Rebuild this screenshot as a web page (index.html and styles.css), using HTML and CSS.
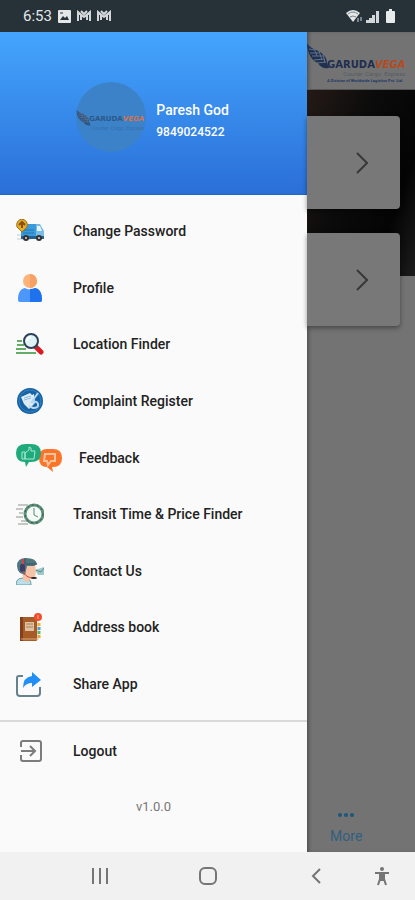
FILE: index.html
```html
<!DOCTYPE html>
<html lang="en">
<head>
    <meta charset="utf-8">
    <meta name="viewport" content="width=device-width, initial-scale=1">
    <title>Garudavega</title>
    <link rel="stylesheet" href="styles.css">
</head>
<body>
    <!-- Wing shape shared by both logos -->
    <svg class="defs" width="0" height="0" aria-hidden="true">
        <symbol id="wing" viewBox="0 0 24 26">
            <path fill="currentColor" d="M0 0C2 5 8 6 13 9c5 3 7 7 7 11l2 5c-5 1-9-1-11-5C5 18 0 10 0 0z"/>
            <path class="feather" d="M2 6l6 1M3 10l9 0M5 13l11 0M7 17l11-1M10 20l9-1M7 5l3 8M12 8l3 9M16 11l2 9"/>
        </symbol>
    </svg>

    <header class="status-bar">
        <span class="time">6:53</span>
        <svg width="13" height="13" viewBox="0 0 13 13"><rect width="13" height="13" rx="1" fill="#e4e7e8"/><path d="M2 10l3-4 2 2 2-2 2 4z" fill="#263238"/><path d="M2 3h3" stroke="#263238"/></svg>
        <svg width="14" height="12" viewBox="0 0 14 12" fill="none" stroke="#d3d7d9" stroke-width="2"><path d="M1 11V2l6 5 6-5v9M4 10V5M10 10V5M4 1l3 3 3-3"/></svg>
        <svg width="14" height="12" viewBox="0 0 14 12" fill="none" stroke="#d3d7d9" stroke-width="2"><path d="M1 11V2l6 5 6-5v9M4 10V5M10 10V5M4 1l3 3 3-3"/></svg>
        <div class="status-right">
            <svg width="17" height="14" viewBox="0 0 17 14"><path d="M0 4q7-6 14 0l-7 9z" fill="#e4e7e8"/><path d="M2 5q5-4 10 0M4 8q3-2 6 0" fill="none" stroke="#7c868a"/><path d="M12 9v4M15 8v4" stroke="#7c868a" stroke-width="2"/></svg>
            <svg width="13" height="13" viewBox="0 0 13 13" fill="#d3d7d9"><path d="M0 10h3v3H0zM3 8h3v5H3zM6 5h3v8H6zM10 1h3v12h-3z"/></svg>
            <svg class="battery" width="9" height="14" viewBox="0 0 9 14" fill="#e8ebec"><path d="M3 0h3v2h2q1 0 1 1v10q0 1-1 1H1q-1 0-1-1V3q0-1 1-1h2z"/></svg>
        </div>
    </header>

    <div class="screen">
        <aside class="drawer">
            <div class="profile">
                <div class="avatar">
                    <svg class="wing" width="16" height="17"><use href="#wing"/></svg>
                    <div class="brand">
                        <div class="brand-name">GARUDA<span>VEGA</span></div>
                        <div class="brand-line">Courier. Cargo. Express</div>
                    </div>
                </div>
                <div class="user">
                    <div class="user-name">Paresh God</div>
                    <div class="user-phone">9849024522</div>
                </div>
            </div>

            <nav class="menu">
                <a href="#password">
                    <svg width="28" height="24" viewBox="0 0 28 24">
                        <path d="M1 16h8M1 20h14" stroke="#c6c9cc"/>
                        <path d="M5 7q0-2 2-2h13v14H5z" fill="#3b9ada"/><path d="M20 5h4l4 7v7h-8z" fill="#79bce8"/>
                        <path d="M21 7h3l2 5h-5z" fill="#e7f4fb"/><path d="M7 11h11M7 14h11" stroke="#2379b8"/><path d="M5 17h23v3H5z" fill="#26618f"/>
                        <circle cx="10" cy="19" r="3" fill="#333"/><circle cx="10" cy="19" r="1" fill="#ddd"/><circle cx="23" cy="19" r="3" fill="#333"/><circle cx="23" cy="19" r="1" fill="#ddd"/>
                        <path d="M6 0a6 6 0 0 1 5 8l-5 5-5-5a6 6 0 0 1 5-8z" fill="#e6ad22" stroke="#96721c"/><path d="M6 9V4M3 6l3-3 3 3" fill="none" stroke="#8d4c1c" stroke-width="2"/>
                    </svg>
                    <span>Change Password</span>
                </a>
                <a href="#profile">
                    <svg width="28" height="28" viewBox="0 0 28 28">
                        <circle cx="14" cy="7" r="7" fill="#fdb379"/><path d="M14 0a7 7 0 0 1 0 14z" fill="#f7a264"/>
                        <path d="M2 26c0-7 2-11 7-12q5 3 10 0c5 1 7 5 7 12q0 2-2 2H4q-2 0-2-2z" fill="#4d96fb"/><path d="M14 15q3 0 5-1c5 1 7 5 7 12q0 2-2 2H14z" fill="#1f72ee"/>
                    </svg>
                    <span>Profile</span>
                </a>
                <a href="#location">
                    <svg width="28" height="22" viewBox="0 0 28 22">
                        <path d="M1 8h5M1 12h7M0 16h10M0 20h20" stroke="#63ad68" stroke-width="2"/>
                        <path d="M19 13l6 6" stroke="#d71920" stroke-width="5" stroke-linecap="round"/><path d="M18 11l3 3" stroke="#455" stroke-width="3"/>
                        <circle cx="15" cy="8" r="7" fill="#dff3f7" stroke="#2f4055" stroke-width="2"/><path d="M11 8a4 4 0 0 1 4-4" fill="none" stroke="#fff" stroke-width="2"/>
                    </svg>
                    <span>Location Finder</span>
                </a>
                <a href="#complaint">
                    <svg width="28" height="28" viewBox="0 0 28 28">
                        <circle cx="14" cy="14" r="13" fill="#1763a6"/><circle cx="14" cy="14" r="11" fill="none" stroke="#3582c0"/>
                        <path d="M5 10l9-4 2 2 2-1 1 9-6 6-5-5z" fill="#dcecf6"/><path d="M8 11l7-2M8 13l7-2" stroke="#8db9dc"/>
                        <path d="M22 6l-7 10M16 16q5-3 6 1t-5 4l-4-2" fill="none" stroke="#b7d7ee" stroke-width="2"/>
                    </svg>
                    <span>Complaint Register</span>
                </a>
                <a href="#feedback" class="wide">
                    <svg width="46" height="28" viewBox="0 0 46 28">
                        <path d="M31 5h6q9 0 9 9t-9 9h-1l1 5-6-5q-8 0-8-9t8-9z" fill="#fb742a"/>
                        <path d="M29 10h10v7h-4l-3 4-1-4h-3z" fill="none" stroke="#ffc39b" stroke-width="2"/>
                        <path d="M10 0h5q10 0 10 9t-10 9h-2l-3 5-1-5Q0 18 0 9t10-9z" fill="#20aa7c"/>
                        <path d="M6 8h3v7H6zM9 9l4-3V3q3 0 2 4h4l-1 8H9z" fill="none" stroke="#a5eacf" stroke-width="1"/>
                    </svg>
                    <span>Feedback</span>
                </a>
                <a href="#transit">
                    <svg width="28" height="22" viewBox="0 0 28 22">
                        <path d="M2 2h10M0 6h7M3 10h4M0 14h7M5 18h6M2 21h10" stroke="#8d9590"/>
                        <circle cx="18" cy="11" r="9" fill="#f4faf7" stroke="#5f8f7b" stroke-width="3"/><circle cx="18" cy="11" r="9" fill="none" stroke="#2f5a49" stroke-dasharray="2 3"/>
                        <path d="M18 5v7l4 2" fill="none" stroke="#638578"/>
                    </svg>
                    <span>Transit Time &amp; Price Finder</span>
                </a>
                <a href="#contact">
                    <svg width="28" height="28" viewBox="0 0 28 28">
                        <path d="M0 28q0-7 7-7h4q4 1 4 7z" fill="#b9dfe9" stroke="#6c9aa8"/>
                        <path d="M6 7h13l1 7-1 7-5 1-2 3q-4 0-5-3z" fill="#f5c3a6"/>
                        <path d="M1 9Q1 1 10 1q10 0 11 6l-3 2h-7l-2 9-5-2q-3-3-3-7z" fill="#4f7780"/><path d="M9 1v6h12" fill="none" stroke="#36565e"/>
                        <path d="M7 2v6" stroke="#d4424e" stroke-width="2"/><rect x="4" y="7" width="5" height="8" rx="2" fill="#3d3d67"/><path d="M7 14q3 7 10 7" fill="none" stroke="#d4424e"/><ellipse cx="18" cy="21" rx="3" ry="1" fill="#222"/>
                        <path d="M19 13l9-3v8h-6z" fill="#9cc9ca"/><path d="M20 13l5 2 3-4" fill="none" stroke="#588d91"/>
                    </svg>
                    <span>Contact Us</span>
                </a>
                <a href="#address">
                    <svg width="28" height="28" viewBox="0 0 28 28">
                        <path d="M19 4h4v23h-4z" fill="#e9e4dc"/><path d="M23 10v3" stroke="#e9b72f" stroke-width="3"/><path d="M23 14v3" stroke="#4b9bd4" stroke-width="3"/><path d="M23 18v3" stroke="#62b661" stroke-width="3"/><path d="M23 22v3" stroke="#dfa93b" stroke-width="3"/>
                        <rect x="4" y="4" width="17" height="24" rx="1" fill="#a75c27"/><path d="M4 4h3v24H4z" fill="#83401b"/><path d="M5 26h17" stroke="#d9a77d" stroke-width="1"/>
                        <rect x="9" y="9" width="9" height="9" fill="#ddc3a4"/><path d="M10 11h7M10 14h7" stroke="#ad7f57"/>
                        <circle cx="22" cy="4" r="4" fill="#ee4d2e"/><path d="M22 2v4" stroke="#ffad84" stroke-width="1"/>
                    </svg>
                    <span>Address book</span>
                </a>
                <a href="#share">
                    <svg width="28" height="26" viewBox="0 0 28 26">
                        <path d="M7 5H3Q1 5 1 7v15q0 3 3 3h17q3 0 3-3v-6" fill="none" stroke="#66808c" stroke-width="2"/>
                        <path d="M16 1l9 8-9 7v-4q-6 0-9 5Q7 6 16 5z" fill="#218ff3"/>
                    </svg>
                    <span>Share App</span>
                </a>
            </nav>

            <div class="drawer-foot">
                <a href="#logout">
                    <svg width="28" height="22" viewBox="0 0 28 22" fill="none" stroke="#7c7c7c" stroke-width="2">
                        <path d="M5 7V3q0-2 2-2h16q2 0 2 2v16q0 2-2 2H7q-2 0-2-2v-4M5 11h13M14 6l5 5-5 5"/>
                    </svg>
                    <span>Logout</span>
                </a>
                <p class="version">v1.0.0</p>
            </div>
        </aside>

        <!-- Home page dimmed behind the drawer -->
        <main class="page">
            <div class="page-head">
                <svg class="wing" width="24" height="26"><use href="#wing"/></svg>
                <div class="brand">
                    <div class="brand-name">GARUDA<span>VEGA</span></div>
                    <div class="brand-line">Courier. Cargo. Express</div>
                    <div class="brand-sub">A Division of Worldwide Logistics Pvt. Ltd.</div>
                </div>
            </div>
            <div class="cards">
                <a class="card" href="#first" aria-label="Open"><svg width="12" height="22" viewBox="0 0 12 22"><path d="M1 1l10 10L1 21"/></svg></a>
                <a class="card" href="#second" aria-label="Open"><svg width="12" height="22" viewBox="0 0 12 22"><path d="M1 1l10 10L1 21"/></svg></a>
            </div>
            <a class="more" href="#more">
                <svg width="18" height="6" viewBox="0 0 18 6" fill="#1d5878"><circle cx="3" cy="3" r="2"/><circle cx="9" cy="3" r="2"/><circle cx="15" cy="3" r="2"/></svg>
                <span>More</span>
            </a>
        </main>
    </div>

    <footer class="nav-bar">
        <button type="button" aria-label="Recents"><svg width="16" height="16" viewBox="0 0 16 16"><path d="M1 0v16M8 0v16M15 0v16"/></svg></button>
        <button type="button" aria-label="Home"><svg width="18" height="18" viewBox="0 0 18 18"><rect x="1" y="1" width="16" height="16" rx="5"/></svg></button>
        <button type="button" aria-label="Back"><svg width="10" height="16" viewBox="0 0 10 16"><path d="M9 1L2 8l7 7"/></svg></button>
        <button type="button" aria-label="Accessibility"><svg width="16" height="20" viewBox="0 0 16 20"><circle cx="8" cy="3" r="1"/><path d="M1 7h14M6 8v5l-2 6M10 8v5l2 6M7 8h2v6H7z"/></svg></button>
    </footer>
</body>
</html>
```

FILE: styles.css
```css
* {
    box-sizing: border-box;
}

body {
    margin: 0;
    min-height: 100vh;
    display: flex;
    flex-direction: column;
    font-family: Roboto, "Liberation Sans", sans-serif;
    background-color: #fafafa;
}

a {
    color: inherit;
    text-decoration: none;
}

svg {
    flex: none;
}

.defs {
    position: absolute;
}

/* Status bar */
.status-bar {
    display: flex;
    align-items: center;
    gap: 6px;
    height: 32px;
    padding: 0 20px 0 23px;
    background-color: #263238;
    color: #e4e7e8;
}

.time {
    font-size: 15px;
    line-height: 32px;
}

.status-right {
    display: flex;
    align-items: center;
    gap: 3px;
    margin-left: auto;
}

.battery {
    margin-left: 4px;
}

.screen {
    flex: 1;
    display: flex;
}

/* Drawer */
.drawer {
    flex: 0 0 74%;
    display: flex;
    flex-direction: column;
    background-color: #fafafa;
}

.profile {
    display: flex;
    align-items: center;
    justify-content: center;
    gap: 10px;
    height: 163px;
    padding: 8px 2px 0 0;
    background: linear-gradient(#44a5fd, #2a6fd8);
    border-bottom: 1px solid #2467c8;
}

.avatar {
    display: flex;
    align-items: center;
    width: 70px;
    height: 70px;
    border-radius: 50%;
    background-color: #3c82c8;
    overflow: hidden;
}

.user {
    padding-top: 8px;
    color: #fff;
    font-weight: 500;
}

.user-name {
    font-size: 14px;
    line-height: 22px;
}

.user-phone {
    font-size: 12px;
    line-height: 22px;
}

.menu {
    flex: 1;
    display: flex;
    flex-direction: column;
    padding: 8px 0;
    border-bottom: 2px solid #dadada;
}

.menu a,
.drawer-foot a {
    flex: 1;
    display: flex;
    align-items: center;
    gap: 29px;
    padding: 0 16px;
    font-size: 14px;
    font-weight: 500;
    color: #222;
}

.menu .wide {
    gap: 17px;
}

.drawer-foot {
    padding: 1px 0 17px;
}

.drawer-foot a,
.version {
    height: 56px;
}

.version {
    margin: 0;
    font-size: 13px;
    line-height: 56px;
    text-align: center;
    color: #777;
}

/* Logo */
.wing {
    color: #1f3050;
}

.feather {
    fill: none;
    stroke: #657287;
}

.brand {
    white-space: nowrap;
}

.brand-name {
    font-family: "DejaVu Sans", sans-serif;
    font-size: 10px;
    font-weight: bold;
    line-height: 10px;
    color: #1f2d50;
}

.brand-name span {
    color: #b54a1c;
    font-style: italic;
}

.brand-line {
    font-size: 6px;
    line-height: 8px;
    text-align: right;
    color: #555c66;
}

.brand-sub {
    font-size: 4px;
    font-weight: bold;
    line-height: 6px;
    color: #1f3a68;
}

.avatar .wing,
.avatar .brand-name {
    color: #2b5789;
}

.avatar .feather {
    stroke: #4280bd;
}

.avatar .brand {
    margin-left: -3px;
    padding-top: 12px;
}

.avatar .brand-name {
    font-size: 7px;
}

.avatar .brand-name span {
    color: #d6734e;
}

.avatar .brand-line {
    font-size: 5px;
    color: #3670ac;
}

/* Page behind the drawer */
.page {
    flex: 1;
    min-width: 0;
    display: flex;
    flex-direction: column;
    background-color: #737373;
    box-shadow: inset 3px 0 4px -2px #444;
}

.page-head {
    display: flex;
    height: 58px;
    padding-top: 11px;
    border-bottom: 1px solid #555;
    overflow: hidden;
}

.page-head .brand {
    margin-left: -4px;
    padding-top: 17px;
}

.cards {
    flex: 1;
    display: flex;
    flex-direction: column;
    gap: 24px;
    padding: 26px 15px 0 0;
    background: linear-gradient(110deg, #241a16, #0b0b0b 40%, #040404 75%, #1c1c1c) no-repeat;
    background-size: 100% 186px;
}

.card {
    display: flex;
    align-items: center;
    justify-content: flex-end;
    height: 93px;
    padding-right: 32px;
    border-radius: 0 4px 4px 0;
    background-color: #787878;
    box-shadow: 0 2px 5px rgba(0, 0, 0, 0.4);
}

.card path {
    fill: none;
    stroke: #383838;
    stroke-width: 2;
}

.more {
    display: flex;
    flex-direction: column;
    align-items: center;
    align-self: flex-start;
    gap: 8px;
    padding: 0 0 6px 23px;
    font-size: 14px;
    line-height: 20px;
    color: #315f80;
}

/* System navigation */
.nav-bar {
    display: grid;
    grid-template-columns: 9fr 9fr 9fr 2fr;
    height: 48px;
    padding: 0 21px 0 46px;
    background-color: #f1f1f1;
}

.nav-bar button {
    display: flex;
    align-items: center;
    justify-content: center;
    padding: 0;
    border: none;
    background: none;
}

.nav-bar svg {
    fill: none;
    stroke: #757575;
    stroke-width: 2;
}
```
